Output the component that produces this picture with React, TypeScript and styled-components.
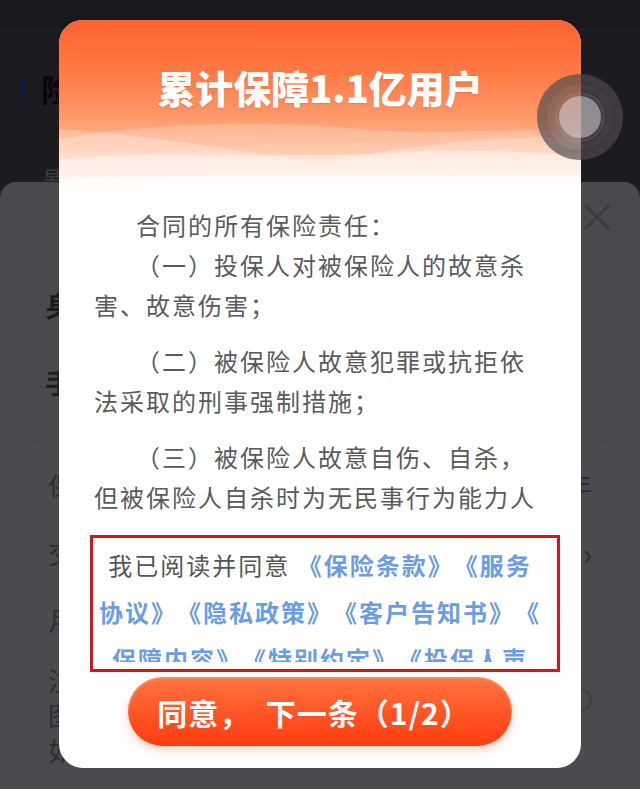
import styled, { createGlobalStyle } from "styled-components";

const GlobalStyle = createGlobalStyle`
  html, body {
    margin: 0;
    padding: 0;
    background: #1c1b20;
  }
  body {
    font-family: "Noto Sans CJK SC", "Noto Sans", sans-serif;
    text-spacing-trim: space-all;
  }
  * {
    box-sizing: border-box;
  }
`;

const links1 = "《保险条款》《服务";
const links2 = "协议》《隐私政策》《客户告知书》《";
const links3 = "保障内容》《特别约定》《投保人声";

export default function App() {
  return (
    <Screen>
      <GlobalStyle />
      <StatusBar />
      <PageHead>
        <Mark />
        <PageTitle>险种信息</PageTitle>
      </PageHead>
      <PageSub>影响您的保障权益</PageSub>

      <Sheet>
        <SheetHead>
          <CloseIcon viewBox="0 0 28 28">
            <path d="M2 2 L26 26 M26 2 L2 26" />
          </CloseIcon>
        </SheetHead>
        <SectionTitle>身份信息</SectionTitle>
        <SectionSub>手机号码</SectionSub>
        <Card>
          <Row>
            <RowLabel>保障期限</RowLabel>
            <RowValue>一年</RowValue>
          </Row>
          <Row>
            <RowLabel>交费方式</RowLabel>
            <Chevron>›</Chevron>
          </Row>
          <Row $short>
            <RowLabel>月交保费</RowLabel>
          </Row>
          <Note>
            <NoteText>
              注：保费按月扣除
              <br />
              图示金额仅供参考
              <br />
              如有疑问请咨询客服
            </NoteText>
            <Radio />
          </Note>
        </Card>
      </Sheet>

      <Modal>
        <Header>
          <Waves viewBox="0 0 522 80" preserveAspectRatio="none">
            <path
              d="M0 24 C 90 8, 200 4, 300 14 C 390 22, 450 10, 522 18 L522 80 L0 80 Z"
              fill="rgba(255,255,255,0.22)"
            />
            <path
              d="M0 14 C 80 18, 170 36, 260 46 C 340 36, 430 16, 522 24 L522 80 L0 80 Z"
              fill="rgba(255,255,255,0.25)"
            />
            <path
              d="M0 44 C 120 34, 230 44, 330 38 C 420 32, 480 40, 522 38 L522 80 L0 80 Z"
              fill="rgba(255,255,255,0.4)"
            />
            <path d="M0 64 C 150 58, 360 62, 522 60 L522 80 L0 80 Z" fill="rgba(255,255,255,0.7)" />
          </Waves>
          <Title>累计保障1.1亿用户</Title>
        </Header>

        <Body>
          <Para>
            <Indent>合同的所有保险责任：</Indent>
            <Indent>（一）投保人对被保险人的故意杀害、故意伤害；</Indent>
          </Para>
          <Para>
            <Indent>（二）被保险人故意犯罪或抗拒依法采取的刑事强制措施；</Indent>
          </Para>
          <Para>
            <Indent>（三）被保险人故意自伤、自杀，但被保险人自杀时为无民事行为能力人</Indent>
          </Para>
        </Body>

        <AgreeBox>
          <AgreeScroll>
            <AgreeLine>
              我已阅读并同意 <LinkText>{links1}</LinkText>
            </AgreeLine>
            <AgreeLine>
              <LinkText>{links2}</LinkText>
            </AgreeLine>
            <AgreeLine>
              <LinkText>{links3}</LinkText>
            </AgreeLine>
          </AgreeScroll>
        </AgreeBox>

        <AgreeButton type="button">同意，{"\u00a0\u00a0"}下一条（1/2）</AgreeButton>
      </Modal>

      <Assist>
        <AssistCore />
      </Assist>
    </Screen>
  );
}

const Screen = styled.div`
  position: relative;
  width: 640px;
  height: 789px;
  overflow: hidden;
  display: flex;
  flex-direction: column;
  background: #1c1b20;
`;

const StatusBar = styled.div`
  height: 28px;
  background: #19181c;
`;

const PageHead = styled.div`
  height: 120px;
  display: flex;
  align-items: center;
  gap: 16px;
  padding-left: 21px;
`;

const Mark = styled.span`
  width: 4px;
  height: 20px;
  border-radius: 2px;
  background: #0d1a47;
`;

const PageTitle = styled.h2`
  margin: 0;
  font-size: 32px;
  font-weight: 700;
  color: #08080a;
`;

const PageSub = styled.div`
  height: 34px;
  padding: 16px 0 0 43px;
  overflow: hidden;
  font-size: 28px;
  line-height: 34px;
  color: #3a393e;
`;

const Sheet = styled.div`
  flex: 1;
  display: flex;
  flex-direction: column;
  background: #4a494e;
  border-radius: 16px 16px 0 0;
`;

const SheetHead = styled.div`
  height: 70px;
  display: flex;
  align-items: center;
  justify-content: flex-end;
  padding-right: 29px;
`;

const CloseIcon = styled.svg`
  width: 28px;
  height: 28px;
  fill: none;
  stroke: #3b3a3f;
  stroke-width: 2.5;
`;

const SectionTitle = styled.div`
  height: 106px;
  display: flex;
  align-items: center;
  padding-left: 45px;
  font-size: 28px;
  font-weight: 700;
  color: #1a191d;
`;

const SectionSub = styled.div`
  height: 48px;
  display: flex;
  align-items: center;
  padding-left: 45px;
  font-size: 28px;
  font-weight: 700;
  color: #1f1e22;
`;

const Card = styled.div`
  margin: 36px 28px 0;
  padding: 8px 20px 0;
  flex: 1;
  background: #4b4a4f;
  border-radius: 12px 12px 0 0;
`;

const Row = styled.div<{ $short?: boolean }>`
  height: ${({ $short }) => ($short ? "66px" : "68px")};
  display: flex;
  align-items: center;
  justify-content: space-between;
`;

const RowLabel = styled.span`
  font-size: 26px;
  color: #2e2d32;
`;

const RowValue = styled.span`
  font-size: 26px;
  color: #2a292e;
`;

const Chevron = styled.span`
  font-size: 30px;
  line-height: 1;
  color: #2a292e;
`;

const Note = styled.div`
  margin-top: 10px;
  display: flex;
  align-items: flex-start;
  justify-content: space-between;
`;

const NoteText = styled.p`
  margin: 0;
  font-size: 26px;
  line-height: 35px;
  color: #2e2d32;
`;

const Radio = styled.span`
  margin-top: 26px;
  width: 24px;
  height: 24px;
  border-radius: 50%;
  border: 2px solid #3f3e43;
`;

const Modal = styled.div`
  position: absolute;
  left: 59px;
  top: 20px;
  width: 522px;
  display: flex;
  flex-direction: column;
  background: #ffffff;
  border-radius: 24px;
  overflow: hidden;
`;

const Header = styled.div`
  position: relative;
  height: 175px;
  padding-top: 44px;
  background: linear-gradient(
    180deg,
    #ff6233 0%,
    #ff7a45 30%,
    #ff9869 55%,
    #ffb28c 70%,
    #ffd6c0 86%,
    #ffffff 100%
  );
`;

const Waves = styled.svg`
  position: absolute;
  left: 0;
  bottom: 0;
  width: 100%;
  height: 80px;
`;

const Title = styled.h1`
  position: relative;
  margin: 0;
  text-align: center;
  font-size: 38px;
  line-height: 46px;
  font-weight: 900;
  color: #ffffff;
  text-shadow: 0 1px 2px rgba(200, 60, 20, 0.25);
`;

const Body = styled.div`
  padding: 10px 35px 0;
  display: flex;
  flex-direction: column;
  gap: 16px;
`;

const Para = styled.div`
  font-size: 24px;
  letter-spacing: 2px;
  line-height: 40px;
  color: #5a5a5a;
`;

const Indent = styled.p`
  margin: 0;
  text-indent: 42px;
`;

const AgreeBox = styled.div`
  margin: 18px 21px 0 31px;
  border: 3px solid #d7141c;
  padding: 3px 10px 7px 0;
`;

const AgreeScroll = styled.div`
  height: 121px;
  overflow: hidden;
`;

const AgreeLine = styled.div`
  text-align: center;
  white-space: nowrap;
  font-size: 24px;
  letter-spacing: 2px;
  line-height: 47px;
  color: #555555;
`;

const LinkText = styled.span`
  color: #6c9de2;
  font-weight: 600;
`;

const AgreeButton = styled.button`
  margin: 5px auto 22px;
  width: 384px;
  height: 69px;
  border: none;
  border-radius: 35px;
  background: linear-gradient(180deg, #ff7440 0%, #ff5424 55%, #ff3d12 100%);
  box-shadow: 0 4px 10px rgba(255, 90, 40, 0.3), inset 0 2px 3px rgba(255, 190, 150, 0.35);
  font-family: "Noto Sans CJK SC", "Noto Sans", sans-serif;
  text-spacing-trim: space-all;
  font-size: 30px;
  font-weight: 600;
  letter-spacing: 1px;
  color: #ffffff;
  padding-right: 18px;
`;

const Assist = styled.div`
  position: absolute;
  left: 537px;
  top: 74px;
  width: 86px;
  height: 86px;
  border-radius: 50%;
  background: rgba(62, 56, 60, 0.5);
  display: flex;
  align-items: center;
  justify-content: center;
  box-shadow: inset 0 0 0 10px rgba(50, 46, 50, 0.12),
    inset 0 0 0 16px rgba(110, 104, 108, 0.15),
    inset 0 0 0 20px rgba(140, 134, 138, 0.15);
`;

const AssistCore = styled.div`
  width: 42px;
  height: 42px;
  border-radius: 50%;
  background: rgba(225, 222, 226, 0.55);
  box-shadow: 0 0 0 4px rgba(160, 156, 160, 0.2);
`;
